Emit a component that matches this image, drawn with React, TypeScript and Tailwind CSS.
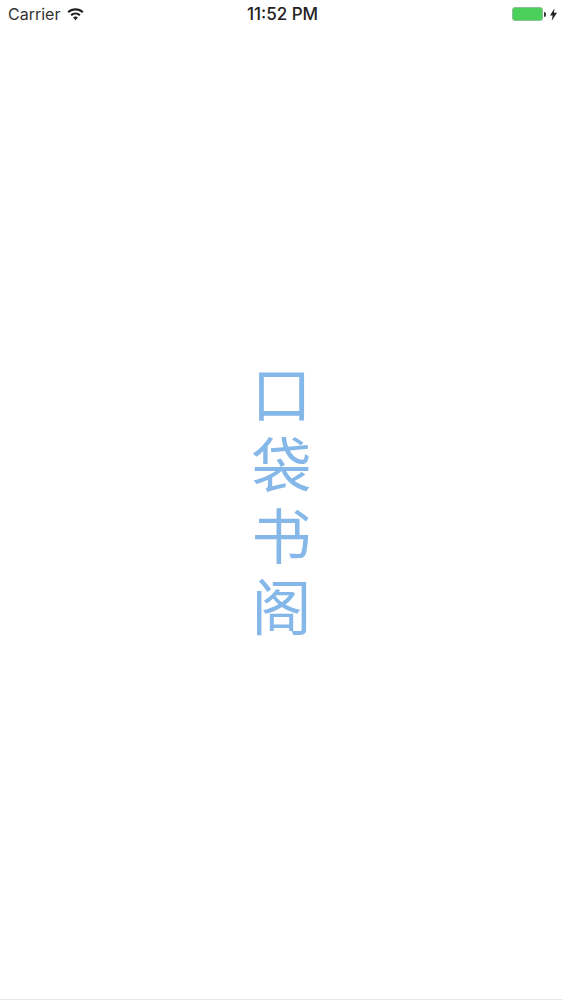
function Wifi() {
  return (
    <svg viewBox="0 0 18 13" className="h-[13px] w-[17px]" fill="#222">
      <path d="M9 0C5.7 0 2.7 1.3.5 3.4l1.5 1.6C3.8 3.2 6.3 2.2 9 2.2s5.2 1 7 2.8l1.5-1.6C15.3 1.3 12.3 0 9 0z" />
      <path d="M9 4.3c-2.1 0-4 .8-5.4 2.2l1.5 1.6C6.1 7.1 7.5 6.5 9 6.5s2.9.6 3.9 1.6l1.5-1.6C13 5.1 11.1 4.3 9 4.3z" />
      <path d="M9 8.6c-1 0-1.9.4-2.6 1.1L9 12.6l2.6-2.9C10.9 9 10 8.6 9 8.6z" />
    </svg>
  );
}

function Battery() {
  return (
    <div className="flex items-center">
      <div className="h-[14px] w-[31px] rounded-[3px] border border-[#8fbf95] bg-[#4cd05c]" />
      <div className="ml-px h-[5px] w-[2px] rounded-r-sm bg-[#333]" />
    </div>
  );
}

export default function App() {
  return (
    <div className="flex h-[1000px] w-[563px] flex-col overflow-hidden border-b border-[#e8e8ea] bg-white font-['Liberation_Sans',sans-serif]">
      <div className="flex h-[28px] shrink-0 items-center justify-between pl-[8px] pr-[6px] text-[#222]">
        <div className="flex w-[120px] items-center gap-[7px]">
          <span className="font-['Inter',sans-serif] text-[16px] leading-none text-[#333]">Carrier</span>
          <Wifi />
        </div>
        <span className="font-['Inter',sans-serif] text-[17px] font-medium leading-none">11:52 PM</span>
        <div className="flex w-[120px] items-center justify-end gap-[4px]">
          <Battery />
          <svg viewBox="0 0 8 14" className="h-[13px] w-[7px]" fill="#222">
            <path d="M5 0 0 8h3l-1 6 6-9H4.6z" />
          </svg>
        </div>
      </div>
      <div className="flex flex-1 flex-col items-center justify-center pb-[33px]">
        <div className="flex flex-col items-center font-['Noto_Sans_CJK_SC',sans-serif] text-[60px] font-normal leading-[71px] text-[#85b7e9]">
          <span>口</span>
          <span>袋</span>
          <span>书</span>
          <span>阁</span>
        </div>
      </div>
    </div>
  );
}
